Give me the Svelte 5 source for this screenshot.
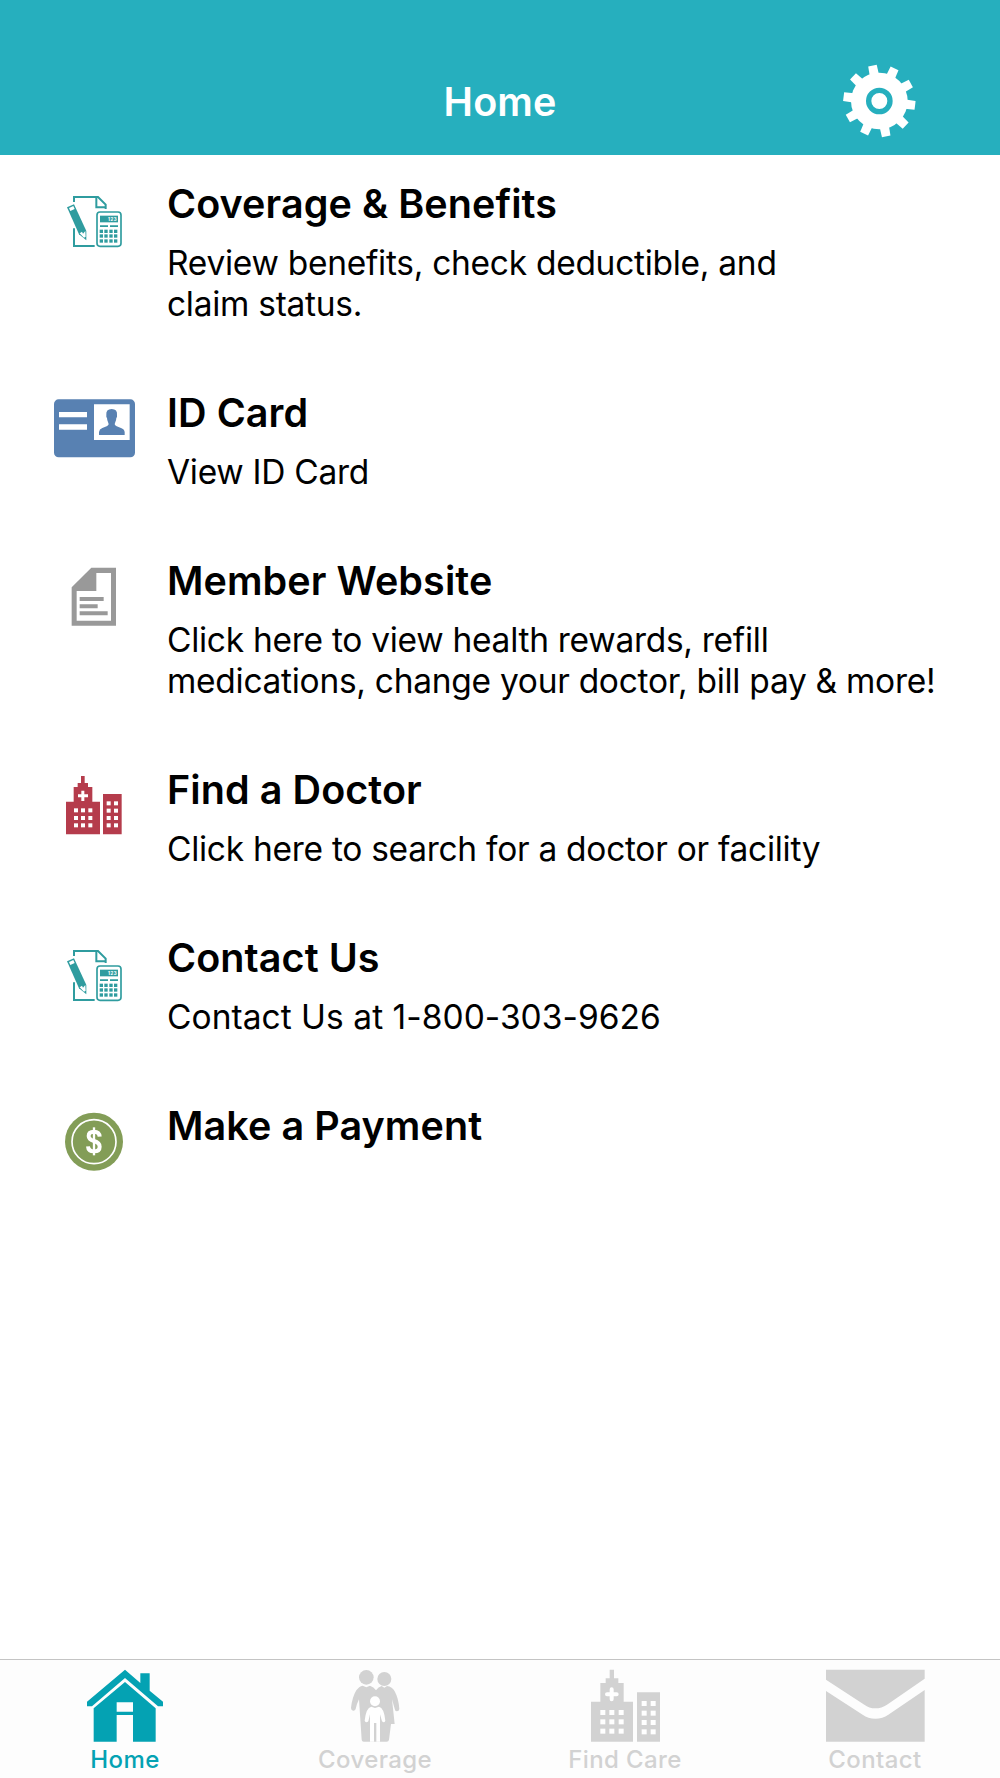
<script lang="ts">
    type Item = { icon: string; title: string; lines: string[]; numeric?: boolean }

    const items: Item[] = [
        {
            icon: 'benefits',
            title: 'Coverage & Benefits',
            lines: ['Review benefits, check deductible, and', 'claim status.'],
        },
        { icon: 'card', title: 'ID Card', lines: ['View ID Card'] },
        {
            icon: 'document',
            title: 'Member Website',
            lines: [
                'Click here to view health rewards, refill',
                'medications, change your doctor, bill pay & more!',
            ],
        },
        {
            icon: 'hospital',
            title: 'Find a Doctor',
            lines: ['Click here to search for a doctor or facility'],
        },
        {
            icon: 'benefits',
            title: 'Contact Us',
            lines: ['Contact Us at 1-800-303-9626'],
            numeric: true,
        },
        { icon: 'payment', title: 'Make a Payment', lines: [] },
    ]

    const tabs = ['Home', 'Coverage', 'Find Care', 'Contact']

    let active = $state('Home')

    const teeth = [...Array(10).keys()].map((i) => i * 36 - 11)
</script>

{#snippet icon(name: string)}
    {#if name === 'benefits'}
        <svg class="icon" viewBox="0 0 270 240" fill="#2f9c9f">
            <path
                d="M72 66V51H144L167 74V87M72 145V198H134"
                fill="none"
                stroke="#2f9c9f"
                stroke-width="6"
            />
            <path d="M139 51V82H167" fill="none" stroke="#2f9c9f" stroke-width="6" />
            <path d="M51 82L72 73L109 153V181L87 163Z" />
            <path d="M57 84L70 78L74 87L61 93Z" fill="#fff" />
            <path d="M89 160L96 155L99 161L106 153L107 170L102 173Z" fill="#fff" />
            <rect x="141" y="96" width="72" height="103" rx="9" fill="#fff" stroke="#2f9c9f" stroke-width="5" />
            <rect x="150" y="107" width="54" height="20" />
            <text x="174" y="122.5" font-size="13" font-weight="800" textLength="26" fill="#fff">123</text>
            <path d="M150 136H174V141H150ZM180 136H204V141H180Z" />
            {#each [149, 163, 178, 192] as x}
                {#each [149, 163, 178] as y}
                    <rect {x} {y} width="10" height="10" />
                {/each}
            {/each}
        </svg>
    {:else if name === 'card'}
        <svg class="icon" viewBox="15 12 270 240" fill="#5881b2">
            <rect x="27" y="43" width="243" height="174" rx="14" />
            <path d="M42 81H126V97H42ZM42 118H126V134H42ZM147 58H254V165H147Z" fill="#fff" />
            <path
                d="M162 150V141Q163 132 172 129L185 124Q193 120 190 114Q186 106 186 99Q183 97 184 90Q182 72 200 72Q218 72 216 90Q217 97 214 99Q214 106 210 114Q207 120 215 124L228 129Q238 132 239 141V150Z"
            />
        </svg>
    {:else if name === 'document'}
        <svg class="icon" viewBox="0 6 270 240" fill="#999">
            <path d="M124 38H198V212H65V97Z" />
            <path d="M139 54H183V197H80V108H139Z" fill="#fff" />
            <path d="M89 126H161V138H89ZM89 148H143V160H89ZM89 169H173V181H89Z" />
        </svg>
    {:else if name === 'hospital'}
        <svg class="icon" viewBox="0 3 270 240" fill="#b53c4c">
            <path d="M48 110H71V66H83V54H93V33H104V54H114V66H127V110H150V208H48ZM159 87H215V208H159Z" />
            <path d="M94 77H103V88H114V97H103V108H94V97H84V88H94Z" fill="#fff" />
            {#each [130, 153, 175] as y}
                {#each [72, 93, 115] as x}
                    <rect {x} {y} width="12" height="12" fill="#fff" />
                {/each}
            {/each}
            {#each [109, 131, 153, 175] as y}
                {#each [170, 192] as x}
                    <rect {x} {y} width="12" height="12" fill="#fff" />
                {/each}
            {/each}
        </svg>
    {:else}
        <svg class="icon" viewBox="0 6 270 240">
            <circle cx="132" cy="125" r="87" fill="#839d57" />
            <circle cx="132" cy="125" r="66" fill="none" stroke="#fff" stroke-width="5" />
            <path
                d="M149 110Q148 95 132 95Q116 95 116 108Q116 118 132 123Q149 128 149 140Q149 154 132 154Q115 154 114 139"
                fill="none"
                stroke="#fff"
                stroke-width="12"
            />
            <path d="M132 82V166" stroke="#fff" stroke-width="7" />
        </svg>
    {/if}
{/snippet}

{#snippet tabIcon(name: string)}
    {#if name === 'Home'}
        <svg width="110" height="85" viewBox="0 30 330 255" fill="currentColor">
            <path d="M165 59L211 99V70H239V122L279 155V169H264L165 84L66 169H51V155Z" />
            <path
                fill-rule="evenodd"
                d="M165 96L257 175V275H189V195H140V275H71V175ZM140 157V185H189V157Z"
            />
        </svg>
    {:else if name === 'Coverage'}
        <svg width="150" height="85" viewBox="0 30 450 255" fill="currentColor">
            <circle cx="199" cy="82" r="22" />
            <circle cx="253" cy="87" r="21" />
            <path
                d="M188 107L199 112L210 107Q221 110 228 121Q235 111 245 108L253 113L261 108Q277 110 284 124Q296 146 298 177Q297 184 291 184Q285 184 284 176L276 148L284 222H273L267 269Q266 275 260 275H191Q186 275 185 269L177 148Q170 162 167 177Q165 183 159 182Q153 181 153 174Q156 143 169 121Q177 109 188 107Z"
            />
            <circle cx="225" cy="154" r="15" fill="#fff" />
            <path
                d="M214 170L225 174L237 170Q252 173 256 212Q253 220 246 214L240 193V275H229V219H222V275H210V193L205 214Q198 220 194 212Q198 173 214 170Z"
                fill="#fff"
            />
        </svg>
    {:else if name === 'Find Care'}
        <svg width="130" height="85" viewBox="0 30 390 255" fill="currentColor">
            <path d="M93 155H121V99H137V85H149V59H162V85H175V99H191V155H219V275H93ZM231 127H300V275H231Z" />
            <path d="M155 118V148M141 133H170" stroke="#fff" stroke-width="12" stroke-linecap="round" />
            {#each [180, 208, 236] as y}
                {#each [121, 148, 176] as x}
                    <rect {x} {y} width="15" height="15" fill="#fff" />
                {/each}
            {/each}
            {#each [153, 182, 210, 238] as y}
                {#each [245, 272] as x}
                    <rect {x} {y} width="15" height="15" fill="#fff" />
                {/each}
            {/each}
        </svg>
    {:else}
        <svg width="150" height="85" viewBox="0 30 450 255" fill="currentColor">
            <path d="M78 59H374V86L261 164Q245 175 226 175Q207 175 193 164L78 89Z" />
            <path d="M78 123L188 194Q204 206 226 206Q248 206 265 194L374 120V275H78Z" />
        </svg>
    {/if}
{/snippet}

<div class="screen">
    <header>
        <h1>Home</h1>
        <button class="settings" aria-label="Settings">
            <svg width="100" height="110" viewBox="0 0 300 330">
                <g transform="translate(148 153)" fill="#fff">
                    <circle r="85" />
                    {#each teeth as angle}
                        <path d="M-14 -78L-13 -108H13L14 -78Z" transform="rotate({angle})" />
                    {/each}
                    <circle r="32" fill="none" stroke="#26afbe" stroke-width="16" />
                </g>
            </svg>
        </button>
    </header>

    <main>
        {#each items as item}
            <div class="item">
                {@render icon(item.icon)}
                <div class="text" class:numeric={item.numeric}>
                    <h2>{item.title}</h2>
                    {#each item.lines as line}
                        <p>{line}</p>
                    {/each}
                </div>
            </div>
        {/each}
    </main>

    <nav>
        {#each tabs as tab}
            <button class="tab" class:active={active === tab} onclick={() => (active = tab)}>
                {@render tabIcon(tab)}
                <span>{tab}</span>
            </button>
        {/each}
    </nav>
</div>

<style>
    .screen {
        display: flex;
        flex-direction: column;
        width: 1000px;
        height: 1778px;
        background: #fff;
        color: #000;
        font-family: Inter, 'Liberation Sans', sans-serif;
        overflow: hidden;
    }

    button {
        border: 0;
        padding: 0;
        background: none;
        font: inherit;
    }

    svg {
        display: block;
    }

    header {
        display: grid;
        grid-template-columns: 1fr auto 1fr;
        height: 155px;
        flex-shrink: 0;
        background: #26afbe;
    }

    h1 {
        grid-column: 2;
        margin: 78px 0 0;
        color: #fff;
        font-size: 39.5px;
        line-height: 48px;
        font-weight: 600;
        letter-spacing: 0.1px;
    }

    .settings {
        justify-self: end;
        align-self: start;
        margin: 50px 70px 0 0;
    }

    main {
        flex: 1;
    }

    .item {
        display: flex;
        padding: 25px 0 39px 50px;
    }

    .icon {
        width: 90px;
        height: 80px;
        flex-shrink: 0;
    }

    .text {
        padding-left: 27px;
    }

    h2 {
        margin: 0 0 15px;
        font-size: 39.5px;
        line-height: 48px;
        font-weight: 600;
        letter-spacing: 0.08px;
    }

    p {
        margin: 0;
        font-size: 33.5px;
        line-height: 41px;
        letter-spacing: -0.28px;
        white-space: nowrap;
    }

    /* phone numbers are set a little wider */
    .numeric p {
        letter-spacing: 0.04px;
    }

    nav {
        display: grid;
        grid-template-columns: repeat(4, 1fr);
        height: 118px;
        flex-shrink: 0;
        border-top: 1px solid #c4c4c4;
        background: #fdfdfd;
    }

    .tab {
        display: flex;
        flex-direction: column;
        align-items: center;
        color: #d2d2d2;
    }

    .tab.active {
        color: #04a2b3;
    }

    .tab span {
        font-size: 24px;
        line-height: 30px;
        font-weight: 450;
        letter-spacing: 0.4px;
    }
</style>
